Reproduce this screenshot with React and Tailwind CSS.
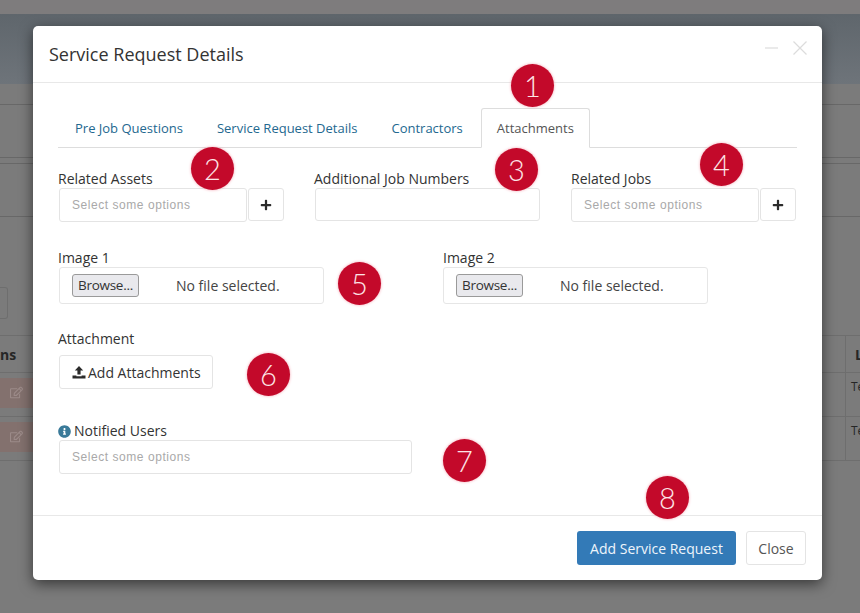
import { FaPlus, FaInfoCircle, FaRegEdit } from "react-icons/fa";

function Badge({ n, className }) {
  return (
    <div className={"absolute z-20 w-[43px] h-[43px] rounded-full bg-[#c3092a] text-[#fde4e6] flex items-center justify-center text-[29px] font-['Lato',sans-serif] font-light leading-none shadow-[0_0_3px_#f3a0ae] " + className}>
      {n}
    </div>
  );
}

function Label({ children }) {
  return <label className="block text-[14px] leading-[18px] text-[#333]">{children}</label>;
}

function ChosenInput({ className, children }) {
  return (
    <div className={"h-[34px] rounded-[3px] border border-[#e4e4e4] bg-white pl-[12px] flex items-center text-[12px] tracking-[0.55px] text-[#a9a9a9] font-['Liberation_Sans',sans-serif] " + className}>
      {children}
    </div>
  );
}

function PlusBtn() {
  return (
    <button className="w-[36px] h-[33px] ml-px rounded-[3px] border border-[#e4e4e4] bg-white flex items-center justify-center text-[#2b2b2b]">
      <FaPlus size={12} />
    </button>
  );
}

function FileBox() {
  return (
    <div className="w-[265px] h-[37px] rounded-[3px] border border-[#e6e6e6] flex items-center pl-[12px] text-[14px] text-[#444]">
      <div className="w-[67px] h-[23px] rounded-[3px] border border-[#9a9a9a] bg-[#e9e9ed] flex items-center justify-center text-[13.5px] tracking-[-0.3px] text-[#333]">Browse...</div>
      <span className="ml-[37px]">No file selected.</span>
    </div>
  );
}

function TableRow() {
  return (
    <div className="h-[44px] border-b border-[#6e6e6e] flex justify-between text-[12px] text-[#262626]">
      <div className="mt-[5px] w-[40px] h-[30px] bg-[#83716e] rounded-r-[3px] pl-[10px] pt-[8px] text-[#9c8b89]">
        <FaRegEdit size={13} />
      </div>
      <span className="w-[15px] pl-[5px] border-l border-[#6e6e6e] pt-[5px] overflow-hidden">Te</span>
    </div>
  );
}

export default function App() {
  return (
    <div className="relative w-[860px] h-[613px] overflow-hidden bg-[#7b7b7b] font-['Open_Sans',sans-serif]">
      {/* dimmed page behind the modal */}
      <div className="h-[14px] bg-[#7e7c7d]"></div>
      <div className="h-[70px] bg-gradient-to-b from-[#5f666c] to-[#6e747a]"></div>
      <div className="h-[21px] border-b border-[#686868]"></div>
      <div className="h-[53px] border-b border-[#686868]"></div>
      <div className="h-[6px] border-b border-[#686868]"></div>
      <div className="h-[53px] border-b border-[#686868]"></div>
      <div className="h-[70px]"></div>
      <div className="w-[8px] h-[32px] rounded-r-[3px] border border-l-0 border-[#6e6e6e]"></div>
      <div className="h-[17px] border-b border-[#6e6e6e]"></div>
      <div className="h-[37px] border-b border-[#6e6e6e] flex justify-between text-[14px] font-bold text-[#262626]">
        <span className="leading-[38px]">ns</span>
        <span className="w-[15px] pl-[9px] border-l border-[#6e6e6e] leading-[38px]">L</span>
      </div>
      <TableRow />
      <TableRow />

      {/* modal */}
      <div className="absolute z-10 left-[33px] top-[26px] w-[789px] h-[554px] rounded-[5px] bg-white shadow-[0_4px_14px_rgba(0,0,0,0.55)] flex flex-col">
        <div className="h-[57px] shrink-0 border-b border-[#e8e8e8] pl-[16px] pr-[15px] flex items-center justify-between">
          <h4 className="text-[18px] text-[#333] pt-px">Service Request Details</h4>
          <div className="flex items-center gap-[15px] mb-[13px] text-[#dcdcdc]">
            <svg width="13" height="14" viewBox="0 0 13 14"><path d="M0 7h13" stroke="currentColor" strokeWidth="1.2" /></svg>
            <svg width="14" height="14" viewBox="0 0 14 14"><path d="M0.5 0.5l13 13M13.5 0.5l-13 13" stroke="currentColor" strokeWidth="1.2" /></svg>
          </div>
        </div>

        <div className="flex-1 pl-[25px] pr-[25px]">
          <ul className="flex mt-[25px] h-[40px] border-b border-[#dddddd] text-[13px]">
            <li className="px-[17px] pt-[11px] text-[#23688f]">Pre Job Questions</li>
            <li className="px-[17px] pt-[11px] text-[#23688f]">Service Request Details</li>
            <li className="px-[17px] pt-[11px] text-[#23688f]">Contractors</li>
            <li className="h-[40px] ml-px px-[15px] pt-[10px] border border-b-white border-[#dddddd] rounded-t-[3px] bg-white text-[#555]">Attachments</li>
          </ul>

          <div className="flex mt-[22px]">
            <div className="w-[256px]">
              <Label>Related Assets</Label>
              <div className="flex pl-px">
                <ChosenInput className="w-[188px]">Select some options</ChosenInput>
                <PlusBtn />
              </div>
            </div>
            <div className="w-[256px]">
              <Label>Additional Job Numbers</Label>
              <div className="w-[225px] h-[33px] ml-px rounded-[3px] border border-[#e4e4e4]"></div>
            </div>
            <div className="w-[227px] pl-px">
              <Label>Related Jobs</Label>
              <div className="flex">
                <ChosenInput className="w-[188px]">Select some options</ChosenInput>
                <PlusBtn />
              </div>
            </div>
          </div>

          <div className="flex mt-[27px]">
            <div className="w-[385px]">
              <Label>Image 1</Label>
              <div className="pl-px"><FileBox /></div>
            </div>
            <div>
              <Label>Image 2</Label>
              <FileBox />
            </div>
          </div>

          <div className="mt-[26px]">
            <Label>Attachment</Label>
            <button className="mt-[7px] ml-px w-[154px] h-[34px] rounded-[3px] border border-[#e4e4e4] bg-white flex items-center pl-[12px] gap-[2px] text-[14px] text-[#333]">
              <svg width="14" height="14" viewBox="0 0 14 14" fill="#2b2b2b">
                <path d="M7 1L11.2 5.6H8.6V9.6H5.4V5.6H2.8Z" />
                <path d="M0.5 10.6H4.4V11.2H9.6V10.6H13.5V13.4H0.5Z" />
              </svg>
              Add Attachments
            </button>
          </div>

          <div className="mt-[33px]">
            <label className="flex items-center gap-[3px] text-[14px] leading-[18px] text-[#333]">
              <FaInfoCircle size={13} className="text-[#3a7a99]" />
              Notified Users
            </label>
            <ChosenInput className="w-[353px] ml-px">Select some options</ChosenInput>
          </div>
        </div>

        <div className="h-[65px] shrink-0 border-t border-[#e8e8e8] flex justify-end items-start pt-[15px] pr-[16px] gap-[10px] text-[14px]">
          <button className="w-[159px] h-[34px] rounded-[3px] bg-[#337ab7] text-[#eef5fb] pt-px">Add Service Request</button>
          <button className="w-[60px] h-[34px] rounded-[3px] border border-[#e4e4e4] bg-white text-[#555] pt-px">Close</button>
        </div>
      </div>

      <Badge n="1" className="left-[511px] top-[64px]" />
      <Badge n="2" className="left-[191px] top-[147px]" />
      <Badge n="3" className="left-[495px] top-[148px]" />
      <Badge n="4" className="left-[700px] top-[143px]" />
      <Badge n="5" className="left-[338px] top-[262px]" />
      <Badge n="6" className="left-[247px] top-[353px]" />
      <Badge n="7" className="left-[443px] top-[439px]" />
      <Badge n="8" className="left-[646px] top-[476px]" />
    </div>
  );
}
